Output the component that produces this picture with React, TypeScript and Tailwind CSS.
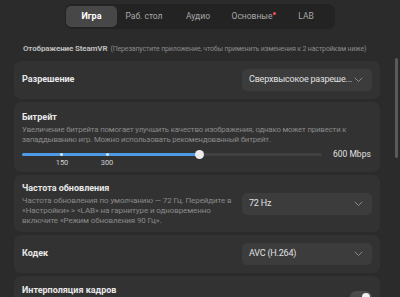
import React from "react";

const Chevron = () => (
  <svg width="9" height="6" viewBox="0 0 9 6" fill="none">
    <path d="M1 1L4.5 4.5L8 1" stroke="#8a8a8a" strokeWidth="1" strokeLinecap="round" strokeLinejoin="round" />
  </svg>
);

const Dropdown = ({ label }: { label: string }) => (
  <div className="w-[130px] h-[22px] shrink-0 rounded-[5px] bg-[#3c3c3c] flex items-center justify-between pl-[7px] pr-[9px]">
    <span className="text-[9px] tracking-[-0.2px] text-[#e0e0e0] whitespace-nowrap">{label}</span>
    <Chevron />
  </div>
);

const tabs = ["Игра", "Раб. стол", "Аудио", "Основные", "LAB"];

export default function App() {
  return (
    <div
      className="w-[400px] h-[297px] bg-[#2b2b2b] overflow-hidden relative"
      style={{ fontFamily: 'Roboto, "Noto Sans", sans-serif' }}
    >
      {/* Tabs */}
      <div className="flex justify-center pt-[4px]">
        <div className="w-[270px] h-[25px] bg-[#232323] rounded-[7px] flex items-center px-[1px]">
          {tabs.map((t, i) => (
            <div
              key={t}
              className={
                i === 0
                  ? "w-[51px] h-[21px] rounded-[5px] bg-[#474747] flex items-center justify-center text-[9px] font-bold text-white"
                  : "w-[54px] h-[21px] flex items-center justify-center text-[8.5px] text-[#a8a8a8] relative"
              }
            >
              <span className="relative">
                {t}
                {t === "Основные" && (
                  <span className="absolute -right-[4px] top-[2px] w-[3px] h-[3px] rounded-full bg-[#ff4d4d]" />
                )}
              </span>
            </div>
          ))}
        </div>
      </div>

      {/* Header */}
      <div className="pl-[23px] mt-[14px] h-[12px] flex items-center whitespace-nowrap">
        <span className="text-[8px] tracking-[-0.15px] font-bold text-[#bdbdbd]">Отображение SteamVR</span>
        <span className="text-[7px] tracking-[-0.15px] text-[#8a8a8a] ml-[3px]">
          (Перезапустите приложение, чтобы применить изменения к 2 настройкам ниже)
        </span>
      </div>

      {/* Cards */}
      <div className="ml-[14px] w-[366px] mt-[6px] flex flex-col gap-[3px]">
        {/* Resolution */}
        <div className="h-[38px] rounded-[7px] bg-[#323232] flex items-center justify-between pl-[8px] pr-[8px]">
          <span className="text-[9px] font-bold text-[#e8e8e8]">Разрешение</span>
          <Dropdown label="Сверхвысокое разреше..." />
        </div>

        {/* Bitrate */}
        <div className="h-[70px] rounded-[7px] bg-[#323232] pl-[8px] pr-[8px] pt-[8px]">
          <div className="text-[9px] leading-[14px] font-bold text-[#e8e8e8]">Битрейт</div>
          <div className="text-[7.8px] tracking-[-0.15px] leading-[10px] text-[#8a8a8a] mt-[1px] w-[340px]">
            Увеличение битрейта помогает улучшить качество изображения, однако может привести к западдыванию игр. Можно использовать рекомендованный битрейт.
          </div>
          <div className="flex items-center mt-[5px] h-[8px]">
            <div className="relative w-[300px] h-[3px] rounded-full bg-[#404040]">
              <div className="absolute left-0 top-0 h-[3px] w-[177px] rounded-full bg-[#4b9be6]" />
              <div className="absolute left-[38px] top-[0px] w-[3px] h-[3px] rounded-full bg-[#d8e8f8]" />
              <div className="absolute left-[84px] top-[0px] w-[3px] h-[3px] rounded-full bg-[#d8e8f8]" />
              <div className="absolute left-[173px] -top-[3px] w-[9px] h-[9px] rounded-full bg-[#ececec]" />
              <div className="absolute left-[30px] top-[5px] w-[20px] text-center text-[7.5px] leading-[10px] text-[#cfcfcf]">150</div>
              <div className="absolute left-[75px] top-[5px] w-[20px] text-center text-[7.5px] leading-[10px] text-[#cfcfcf]">300</div>
            </div>
            <span className="ml-[11px] text-[8.5px] text-[#e0e0e0] whitespace-nowrap">600 Mbps</span>
          </div>
        </div>

        {/* Refresh rate */}
        <div className="h-[57px] rounded-[7px] bg-[#323232] flex items-center justify-between pl-[8px] pr-[8px]">
          <div className="w-[212px] -mt-[1px]">
            <div className="text-[9px] leading-[14px] font-bold text-[#e8e8e8]">Частота обновления</div>
            <div className="text-[8px] tracking-[-0.1px] leading-[10px] text-[#8a8a8a] mt-[1px]">
              Частота обновления по умолчанию — 72 Гц. Перейдите в «Настройки» &gt; «LAB» на гарнитуре и одновременно включите «Режим обновления 90 Гц».
            </div>
          </div>
          <Dropdown label="72 Hz" />
        </div>

        {/* Codec */}
        <div className="h-[38px] rounded-[7px] bg-[#323232] flex items-center justify-between pl-[8px] pr-[8px]">
          <span className="text-[9px] font-bold text-[#e8e8e8]">Кодек</span>
          <Dropdown label="AVC (H.264)" />
        </div>

        {/* Frame interpolation */}
        <div className="h-[40px] rounded-[7px] bg-[#323232] flex items-start justify-between pl-[8px] pr-[8px] pt-[7px]">
          <span className="text-[9px] leading-[14px] font-bold text-[#e8e8e8]">Интерполяция кадров</span>
          <div className="mt-[8px] w-[22px] h-[12px] rounded-full bg-[#4a4a4a] flex items-center justify-end pr-[2px]">
            <div className="w-[8px] h-[8px] rounded-full bg-[#f0f0f0]" />
          </div>
        </div>
      </div>

      {/* Scrollbar */}
      <div className="absolute left-[395px] top-[58px] w-[3px] h-[100px] rounded-full bg-[#5a5a5a]" />
    </div>
  );
}
